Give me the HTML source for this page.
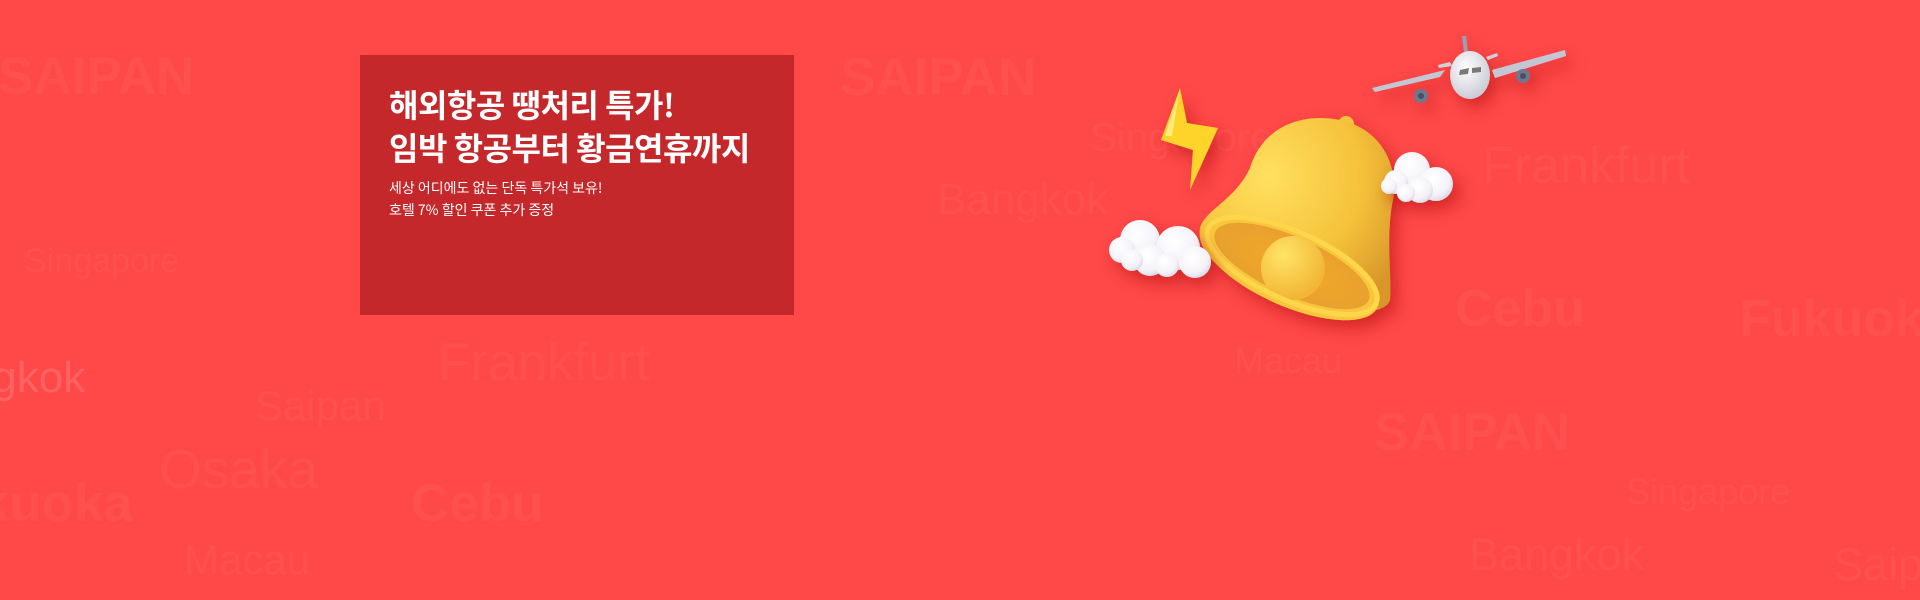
<!DOCTYPE html>
<html><head><meta charset="utf-8"><style>
*{margin:0;padding:0}
body{width:1920px;height:600px;overflow:hidden;background:#ff4848;position:relative;font-family:"Liberation Sans","Noto Sans CJK KR",sans-serif}
.t{position:absolute;line-height:1;white-space:nowrap;color:#ff5050;font-weight:400}
.b{font-weight:700;color:#ff5050}
.box{position:absolute;left:360px;top:55px;width:434px;height:260px;background:#c4282b}
.h{position:absolute;left:29px;top:28px;color:#fff;font-weight:700;font-size:32px;line-height:43px;letter-spacing:-0.5px;font-family:"Noto Sans CJK KR","Liberation Sans",sans-serif}
.s{position:absolute;left:29px;top:122px;color:#fff;font-size:14px;line-height:22px;font-family:"Noto Sans CJK KR","Liberation Sans",sans-serif}
svg{position:absolute;left:0;top:0}
</style></head><body>
<div class="t b" style="left:-2px;top:50px;font-size:53px">SAIPAN</div>
<div class="t b" style="left:840px;top:51px;font-size:53px">SAIPAN</div>
<div class="t" style="left:1090px;top:118px;font-size:40px">Singapore</div>
<div class="t" style="left:1482px;top:140px;font-size:52px">Frankfurt</div>
<div class="t" style="left:937px;top:178px;font-size:44px">Bangkok</div>
<div class="t" style="left:24px;top:244px;font-size:34px">Singapore</div>
<div class="t b" style="left:1455px;top:283px;font-size:52px">Cebu</div>
<div class="t b" style="left:1739px;top:293px;font-size:52px">Fukuoka</div>
<div class="t" style="left:1234px;top:343px;font-size:36px">Macau</div>
<div class="t" style="left:-86px;top:356px;font-size:44px;color:#ff6262">Bangkok</div>
<div class="t" style="left:438px;top:336px;font-size:53px">Frankfurt</div>
<div class="t" style="left:255px;top:385px;font-size:42px">Saipan</div>
<div class="t b" style="left:1374px;top:406px;font-size:53px">SAIPAN</div>
<div class="t" style="left:159px;top:442px;font-size:55px">Osaka</div>
<div class="t b" style="left:-85px;top:477px;font-size:53px">Fukuoka</div>
<div class="t b" style="left:411px;top:477px;font-size:53px">Cebu</div>
<div class="t" style="left:1626px;top:474px;font-size:36px">Singapore</div>
<div class="t" style="left:184px;top:539px;font-size:42px">Macau</div>
<div class="t" style="left:1469px;top:532px;font-size:45px">Bangkok</div>
<div class="t" style="left:1833px;top:542px;font-size:45px">Saipan</div>

<div class="box">
<div class="h">해외항공 땡처리 특가!<br>임박 항공부터 황금연휴까지</div>
<div class="s">세상 어디에도 없는 단독 특가석 보유!<br>호텔 7% 할인 쿠폰 추가 증정</div>
</div>

<svg width="1920" height="600" viewBox="0 0 1920 600">
<defs>
<radialGradient id="bell" cx="0.35" cy="0.3" r="0.8"><stop offset="0" stop-color="#ffe060"/><stop offset="0.6" stop-color="#f5c23a"/><stop offset="1" stop-color="#d9972a"/></radialGradient>
<radialGradient id="in" cx="0.5" cy="0.5" r="0.6"><stop offset="0" stop-color="#f0a828"/><stop offset="1" stop-color="#e8a030"/></radialGradient>
<radialGradient id="ball" cx="0.35" cy="0.3" r="0.7"><stop offset="0" stop-color="#ffe468"/><stop offset="1" stop-color="#f2b534"/></radialGradient>
<radialGradient id="cl" cx="0.4" cy="0.35" r="0.7"><stop offset="0" stop-color="#fff"/><stop offset="0.7" stop-color="#f4f2f8"/><stop offset="1" stop-color="#d8d4e2"/></radialGradient>
<radialGradient id="pl" cx="0.4" cy="0.35" r="0.7"><stop offset="0" stop-color="#fff"/><stop offset="1" stop-color="#c8c8d4"/></radialGradient>
<filter id="sh" x="-30%" y="-30%" width="160%" height="160%"><feDropShadow dx="6" dy="8" stdDeviation="8" flood-color="#a01010" flood-opacity="0.45"/></filter>
</defs>
<polygon points="1180,88 1161,140 1193,150 1190,190 1218,128 1187,123" fill="#ffd42a" filter="url(#sh)"/>
<polygon points="1180,88 1165,136 1172,136" fill="#fff3a0" opacity="0.7"/>
<g filter="url(#sh)">
<circle cx="1346" cy="124" r="8" fill="#f2c33c"/>
<path d="M1250,168 C1262,128 1300,112 1340,120 C1385,130 1400,170 1392,205 C1386,240 1392,280 1390,300 C1385,318 1330,315 1280,298 C1230,280 1195,255 1200,228 C1205,210 1235,200 1250,168 Z" fill="url(#bell)"/>
<ellipse cx="1290" cy="268" rx="96" ry="38" transform="rotate(24 1290 268)" fill="#f6c63c"/>
<ellipse cx="1292" cy="266" rx="84" ry="29" transform="rotate(24 1292 266)" fill="url(#in)"/>
<circle cx="1293" cy="268" r="32" fill="url(#ball)"/>
<ellipse cx="1292" cy="266" rx="92" ry="34" transform="rotate(24 1292 266)" fill="none" stroke="#ffd54a" stroke-width="5"/>
</g>
<g filter="url(#sh)">
<circle cx="1140" cy="240" r="20" fill="url(#cl)"/><circle cx="1178" cy="248" r="22" fill="url(#cl)"/><circle cx="1195" cy="262" r="16" fill="url(#cl)"/>
<circle cx="1122" cy="250" r="13" fill="url(#cl)"/><circle cx="1150" cy="260" r="16" fill="url(#cl)"/><circle cx="1132" cy="260" r="11" fill="url(#cl)"/><circle cx="1167" cy="265" r="12" fill="url(#cl)"/>
<circle cx="1412" cy="170" r="18" fill="url(#cl)"/><circle cx="1436" cy="184" r="17" fill="url(#cl)"/><circle cx="1396" cy="182" r="12" fill="url(#cl)"/><circle cx="1420" cy="190" r="13" fill="url(#cl)"/><circle cx="1406" cy="193" r="9" fill="url(#cl)"/><circle cx="1389" cy="186" r="8" fill="url(#cl)"/>
</g>
<g filter="url(#sh)">
<path d="M1464,52 L1462,36 L1466,36 L1468,52 Z" fill="#9aa0b4"/>
<path d="M1440,77 L1375,92 L1372,88 L1445,70 Z" fill="#c4c6d4"/>
<path d="M1492,70 L1565,50 L1566,56 L1495,78 Z" fill="#c4c6d4"/>
<path d="M1450,62 L1438,65 L1439,68 L1452,66 Z M1486,57 L1497,53 L1498,56 L1488,60 Z" fill="#cfd0dc"/>
<circle cx="1421" cy="96" r="7" fill="#70768e"/><circle cx="1421" cy="96" r="3" fill="#4a4e66"/>
<circle cx="1523" cy="76" r="7" fill="#70768e"/><circle cx="1523" cy="76" r="3" fill="#4a4e66"/>
<ellipse cx="1470" cy="75" rx="20" ry="24" fill="url(#pl)"/>
<path d="M1460,70 L1469,68 L1468,74 L1459,75 Z M1472,68 L1481,67 L1481,72 L1472,73 Z" fill="#7a7a72"/>
</g>
</svg>
</body></html>
